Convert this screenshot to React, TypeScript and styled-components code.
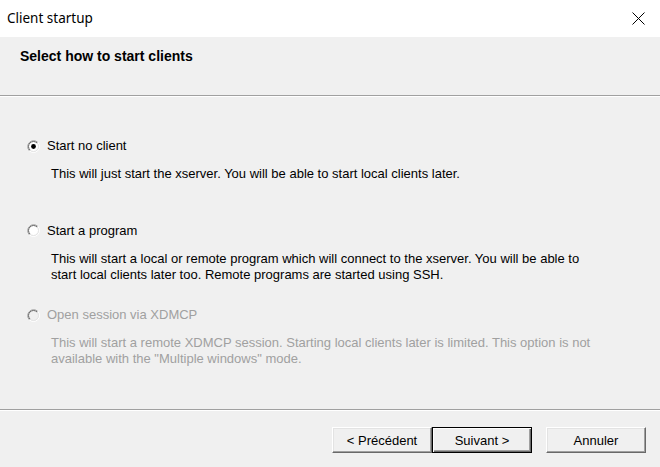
import React from 'react';
import styled, { createGlobalStyle } from 'styled-components';

// Types
interface StartOption {
  label: string;
  lines: string[];
  checked?: boolean;
  disabled?: boolean;
}

const options: StartOption[] = [
  {
    label: 'Start no client',
    lines: ['This will just start the xserver. You will be able to start local clients later.'],
    checked: true,
  },
  {
    label: 'Start a program',
    lines: [
      'This will start a local or remote program which will connect to the xserver. You will be able to',
      'start local clients later too. Remote programs are started using SSH.',
    ],
  },
  {
    label: 'Open session via XDMCP',
    lines: [
      'This will start a remote XDMCP session. Starting local clients later is limited. This option is not',
      'available with the "Multiple windows" mode.',
    ],
    disabled: true,
  },
];

const GlobalStyle = createGlobalStyle`
  html, body {
    margin: 0;
    padding: 0;
    background: #f0f0f0;
  }
`;

const Radio = ({ checked, disabled }: { checked?: boolean; disabled?: boolean }) => (
  <RadioBox width="13" height="13" viewBox="0 0 13 13">
    <circle cx="6.5" cy="6.5" r="6" fill="none" stroke="#fff" />
    <path d="M2.26 10.74 A6 6 0 0 1 10.74 2.26" fill="none" stroke="#a0a0a0" />
    <circle cx="6.5" cy="6.5" r="5" fill={disabled ? '#f0f0f0' : '#fff'} stroke="#e3e3e3" />
    <path d="M2.96 10.04 A5 5 0 0 1 10.04 2.96" fill="none" stroke="#696969" />
    {checked && <circle cx="6.5" cy="6.5" r="2.4" fill="#000" />}
  </RadioBox>
);

export default function App() {
  return (
    <>
      <GlobalStyle />
      <Window>
        <TitleBar>
          <Title>Client startup</Title>
          <svg width="13" height="13" viewBox="0 0 13 13">
            <path d="M0.5 0.5 L12.5 12.5 M12.5 0.5 L0.5 12.5" stroke="#000" strokeWidth="1" />
          </svg>
        </TitleBar>
        <Header>Select how to start clients</Header>
        <Separator />
        <Content>
          {options.map((o) => (
            <Option key={o.label}>
              <OptionRow>
                <Radio checked={o.checked} disabled={o.disabled} />
                <Label $disabled={o.disabled}>{o.label}</Label>
              </OptionRow>
              <Description $disabled={o.disabled}>
                {o.lines.map((l) => (
                  <div key={l}>{l}</div>
                ))}
              </Description>
            </Option>
          ))}
        </Content>
        <Separator />
        <Footer>
          <ButtonGroup>
            <Button>&lt; Précédent</Button>
            <Button $default>Suivant &gt;</Button>
          </ButtonGroup>
          <Button>Annuler</Button>
        </Footer>
      </Window>
    </>
  );
}

const Window = styled.div`
  width: 660px;
  height: 467px;
  display: flex;
  flex-direction: column;
  background: #f0f0f0;
  font-family: 'Liberation Sans', Arial, sans-serif;
  font-size: 13px;
  color: #000;
  overflow: hidden;
`;

const TitleBar = styled.div`
  height: 37px;
  flex: none;
  display: flex;
  align-items: center;
  justify-content: space-between;
  padding: 0 15px 0 7px;
  background: #fff;
  box-sizing: border-box;
`;

const Title = styled.span`
  font-family: 'Noto Sans', 'Open Sans', sans-serif;
  font-size: 13.5px;
  margin-top: -1px;
`;

const Header = styled.div`
  height: 58px;
  flex: none;
  box-sizing: border-box;
  padding: 11px 20px 0;
  font-weight: bold;
  font-size: 14px;
  line-height: 16px;
`;

const Separator = styled.div`
  flex: none;
  height: 1px;
  background: #a0a0a0;
  border-bottom: 1px solid #fff;
`;

const Content = styled.div`
  flex: 1;
  padding: 41px 0 0 27px;
`;

const Option = styled.div`
  height: 84.5px;
`;

const OptionRow = styled.div`
  display: flex;
  align-items: center;
  gap: 7px;
  height: 16px;
`;

const RadioBox = styled.svg`
  flex: none;
`;

const Label = styled.span<{ $disabled?: boolean }>`
  line-height: 16px;
  color: ${({ $disabled }) => ($disabled ? '#a0a0a0' : '#000')};
`;

const Description = styled.div<{ $disabled?: boolean }>`
  margin: 12px 0 0 24px;
  line-height: 16px;
  color: ${({ $disabled }) => ($disabled ? '#a0a0a0' : '#000')};
`;

const Footer = styled.div`
  height: 56px;
  flex: none;
  box-sizing: border-box;
  display: flex;
  justify-content: flex-end;
  align-items: flex-start;
  gap: 14px;
  padding: 16px 14px 0 0;
`;

const ButtonGroup = styled.div`
  display: flex;
`;

const Button = styled.button<{ $default?: boolean }>`
  width: 100px;
  height: 26px;
  box-sizing: border-box;
  background: #f0f0f0;
  font-family: 'Liberation Sans', Arial, sans-serif;
  font-size: 13px;
  color: #000;
  padding: 0;
  border: 1px solid;
  border-color: #fff #696969 #696969 #fff;
  box-shadow: inset -1px -1px 0 #a0a0a0, inset 1px 1px 0 #e3e3e3;
  ${({ $default }) =>
    $default &&
    `
    border-color: #000;
    box-shadow: inset 1px 1px 0 #fff, inset -1px -1px 0 #696969, inset -2px -2px 0 #a0a0a0;
  `}
`;
